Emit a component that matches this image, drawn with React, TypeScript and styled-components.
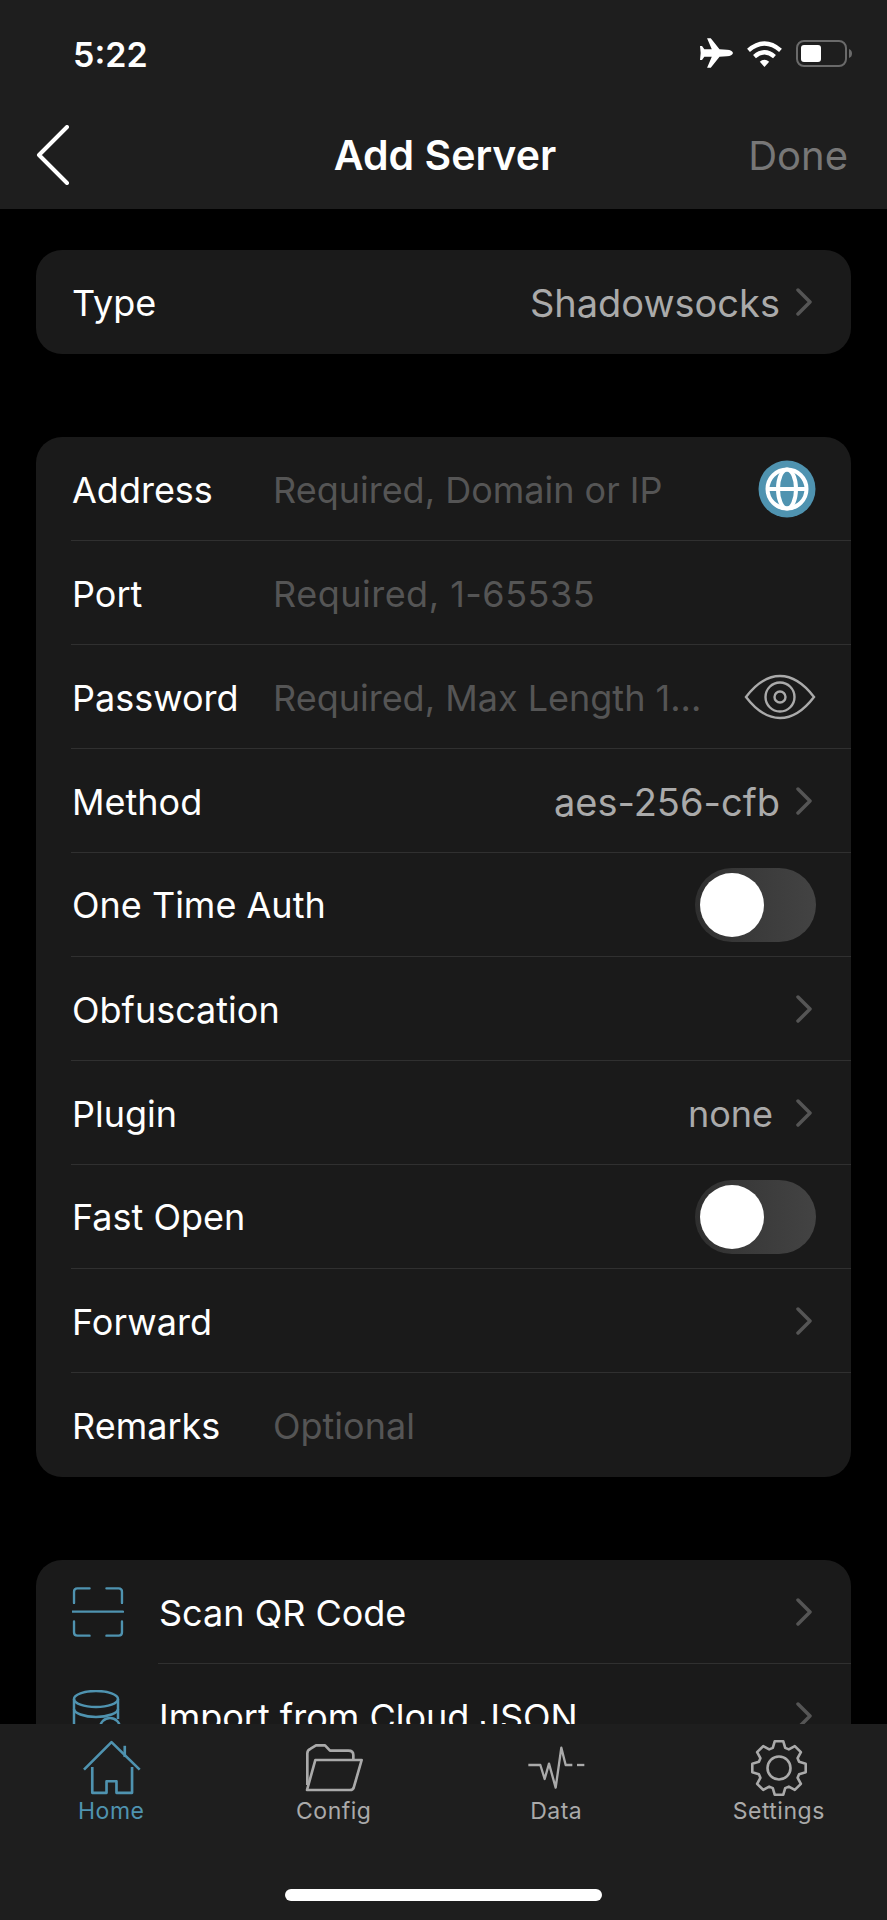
import styled, { createGlobalStyle } from "styled-components";
import type { ReactNode } from "react";

const ACCENT = "#4f93b0";

const GlobalStyle = createGlobalStyle`
    html, body {
        margin: 0;
        padding: 0;
        background: #000;
    }
    * {
        box-sizing: border-box;
    }
`;

const Page = styled.div`
    width: 887px;
    height: 1920px;
    display: flex;
    flex-direction: column;
    overflow: hidden;
    background: #000;
    color: #fff;
    font-family: Inter, "Liberation Sans", sans-serif;
`;

const Header = styled.header`
    height: 209px;
    flex: none;
    background: #1e1e1e;
`;

const StatusBar = styled.div`
    height: 108px;
    padding: 34px 34px 0 73px;
    display: flex;
    justify-content: space-between;
    align-items: flex-start;
`;

const Time = styled.span`
    font-size: 34px;
    line-height: 42px;
    font-weight: 600;
`;

const StatusIcons = styled.div`
    display: flex;
    align-items: center;
    padding-top: 4px;
    gap: 13px;
`;

const NavBar = styled.div`
    height: 94px;
    display: grid;
    grid-template-columns: 126px 1fr 120px;
    align-items: center;
    padding: 0 39px 0 36px;
`;

const Title = styled.h1`
    margin: 0;
    text-align: center;
    font-size: 41px;
    font-weight: 600;
    white-space: nowrap;
`;

const DoneButton = styled.span`
    text-align: right;
    font-size: 40px;
    color: #777;
`;

const Content = styled.main`
    flex: 1;
    min-height: 0;
    overflow: hidden;
    padding: 41px 36px 0;
`;

const Card = styled.section`
    background: #1a1a1a;
    border-radius: 26px;
    overflow: hidden;
    margin-bottom: 83px;
`;

const Row = styled.div`
    height: 104px;
    margin-left: 35px;
    padding: 0 35px 0 1px;
    display: flex;
    align-items: center;
    border-bottom: 1px solid #303030;
    &:last-child {
        border-bottom: none;
    }
`;

const Label = styled.span`
    padding-top: 2px;
    font-size: 36px;
    white-space: nowrap;
`;

const FieldLabel = styled(Label)`
    width: 201px;
    flex: none;
`;

const ToggleLabel = styled(Label)`
    padding-top: 0;
`;

const Placeholder = styled.span<{ $numeric?: boolean }>`
    flex: 1;
    padding-top: 2px;
    font-size: 36px;
    letter-spacing: ${(p) => (p.$numeric ? "0.5px" : "0")};
    color: #555;
    white-space: nowrap;
`;

const Value = styled.span<{ $small?: boolean }>`
    margin-left: auto;
    margin-right: ${(p) => (p.$small ? "7px" : "0")};
    padding-top: 2px;
    font-size: ${(p) => (p.$small ? "36px" : "38px")};
    color: #aaa;
    white-space: nowrap;
`;

const ChevronBox = styled.span<{ $bare?: boolean }>`
    margin-left: ${(p) => (p.$bare ? "auto" : "15px")};
    margin-right: 3px;
    display: flex;
`;

const Toggle = styled.span`
    margin-left: auto;
    width: 121px;
    height: 74px;
    flex: none;
    padding: 5px;
    border-radius: 37px;
    background: linear-gradient(90deg, #2f2f2f 0%, #3a3a3a 45%, #434343 100%);
`;

const Thumb = styled.span`
    display: block;
    width: 64px;
    height: 64px;
    border-radius: 50%;
    background: #fff;
`;

const MenuRow = styled.div`
    height: 104px;
    display: flex;
    align-items: stretch;
    padding-left: 36px;
    &:last-child > div {
        border-bottom: none;
    }
`;

const MenuIcon = styled.span`
    width: 86px;
    flex: none;
    display: flex;
    align-items: center;
`;

const MenuBody = styled.div`
    flex: 1;
    display: flex;
    align-items: center;
    padding: 0 35px 0 1px;
    border-bottom: 1px solid #303030;
`;

const TabBar = styled.nav`
    height: 196px;
    flex: none;
    background: #1e1e1e;
    display: flex;
    flex-direction: column;
    justify-content: space-between;
    padding: 14px 0 19px;
`;

const Tabs = styled.div`
    display: grid;
    grid-template-columns: repeat(4, 222.5px);
`;

const Tab = styled.div<{ $active?: boolean }>`
    display: flex;
    flex-direction: column;
    align-items: center;
    color: ${(p) => (p.$active ? ACCENT : "#aaa")};
`;

const TabIcon = styled.span`
    height: 60px;
    display: flex;
    align-items: center;
    justify-content: center;
`;

const TabLabel = styled.span`
    font-size: 23px;
    line-height: 26px;
    letter-spacing: 0.5px;
`;

const HomeIndicator = styled.div`
    width: 317px;
    height: 12px;
    margin: 0 auto;
    border-radius: 6px;
    background: #fff;
`;

const Chevron = () => (
    <svg width="18" height="28" viewBox="0 0 18 28" fill="none">
        <path d="M3 2l12 12L3 26" stroke="#555" strokeWidth="3.500" strokeLinecap="round" strokeLinejoin="round" />
    </svg>
);

const Plane = () => (
    <svg width="33" height="30" viewBox="120 57 98 88" fill="#fff">
        <path d="M218 101Q216 92 200 91L178 90 152 57H141L155 90 133 90 126 80H120L122 101 120 122H126L133 112 155 112 141 145H152L178 112 200 111Q216 110 218 101Z" />
    </svg>
);

const Wifi = () => (
    <svg width="37" height="27" viewBox="258 60 108 81" fill="none" stroke="#fff" strokeWidth="13">
        <path d="M264 91Q312 50 360 91" />
        <path d="M282 110Q312 84 342 110" />
        <path d="M298 125L312 141 326 125Q312 113 298 125Z" fill="#fff" stroke="none" />
    </svg>
);

const Battery = () => (
    <svg width="57" height="27" viewBox="0 0 57 27" fill="none">
        <rect x="1" y="1" width="49" height="25" rx="7" stroke="#6a6a6a" strokeWidth="2" />
        <rect x="5" y="5" width="20" height="17" rx="3" fill="#fff" />
        <path d="M53 9q3 1 3 4.500t-3 4.500z" fill="#6a6a6a" />
    </svg>
);

const BackIcon = () => (
    <svg width="34" height="60" viewBox="0 0 34 60" fill="none">
        <path d="M31 2L3 30l28 28" stroke="#fff" strokeWidth="4" strokeLinecap="round" strokeLinejoin="round" />
    </svg>
);

const GlobeIcon = () => (
    <svg width="58" height="58" viewBox="0 0 58 58" fill="none" stroke="#fff" strokeWidth="4">
        <circle cx="29" cy="29" r="28.500" fill={ACCENT} stroke="none" />
        <circle cx="29" cy="29" r="19.500" />
        <ellipse cx="29" cy="29" rx="9" ry="19.500" />
        <path d="M9 29h40" />
    </svg>
);

const EyeIcon = () => (
    <svg width="72" height="46" viewBox="0 0 72 46" fill="none" stroke="#aaa" strokeWidth="2.400">
        <path d="M2 23Q18 2 36 2t34 21Q54 44 36 44T2 23Z" />
        <circle cx="36" cy="23" r="14.500" />
        <circle cx="36" cy="23" r="5.500" />
    </svg>
);

const ScanIcon = () => (
    <svg width="52" height="52" viewBox="214 142 154 150" fill="none" stroke={ACCENT} strokeWidth="7" strokeLinecap="round">
        <path d="M266 147H230Q220 147 220 157V190" />
        <path d="M316 147H352Q362 147 362 157V190" />
        <path d="M266 287H230Q220 287 220 277V245" />
        <path d="M316 287H352Q362 287 362 277V245" />
        <path d="M216 216H365" />
    </svg>
);

// only the top of this one shows, the tab bar covers the rest
const CloudIcon = () => (
    <svg width="50" height="52" viewBox="0 0 50 52" fill="none" stroke={ACCENT} strokeWidth="2.500">
        <ellipse cx="24" cy="9" rx="22" ry="8" />
        <path d="M2 9v36c0 4 10 7 22 7M46 9v20" />
        <path d="M2 19c0 4 10 8 22 8s22-4 22-8" />
        <circle cx="38" cy="38" r="10" />
    </svg>
);

const HomeIcon = () => (
    <svg width="63" height="60" viewBox="240 595 190 180" fill="none" stroke={ACCENT} strokeWidth="8" strokeLinejoin="round">
        <path d="M252 690L335 607 420 690" />
        <path d="M375 618V652" />
        <path d="M277 682V760H320V725H350V760H397V682" />
    </svg>
);

const FolderIcon = () => (
    <svg width="60" height="54" viewBox="912 608 180 152" fill="none" stroke="#aaa" strokeWidth="8" strokeLinejoin="round">
        <path d="M922 735V640Q922 630 932 626L948 616H975L990 632H1045Q1060 632 1060 645V658" />
        <path d="M946 660H1085L1062 740Q1060 750 1050 750H921Z" />
    </svg>
);

const PulseIcon = () => (
    <svg width="58" height="46" viewBox="232 136 174 138" fill="none" stroke="#aaa" strokeWidth="7" strokeLinejoin="round">
        <path d="M236 196H272L285 238 298 192 318 264 335 144 348 196H368" />
        <path d="M382 196H404" />
    </svg>
);

// the cog has 8 teeth, one of them pointing straight up
const gearPath = () => {
    const points: string[] = [];
    for (let i = 0; i < 8; i++) {
        const centre = (i * Math.PI) / 4 - Math.PI / 2;
        const steps: [number, number][] = [
            [-0.3, 21],
            [-0.16, 27],
            [0.16, 27],
            [0.3, 21],
        ];
        steps.forEach(([offset, radius]) => {
            const x = 30 + radius * Math.cos(centre + offset);
            const y = 30 + radius * Math.sin(centre + offset);
            points.push(`${x.toFixed(1)} ${y.toFixed(1)}`);
        });
    }
    return `M${points.join("L")}Z`;
};

const GearIcon = () => (
    <svg width="60" height="60" viewBox="0 0 60 60" fill="none" stroke="#aaa" strokeWidth="2.600" strokeLinejoin="round">
        <path d={gearPath()} />
        <circle cx="30" cy="30" r="11.500" />
    </svg>
);

const Switch = () => (
    <Toggle>
        <Thumb />
    </Toggle>
);

const TABS: { label: string; icon: ReactNode; active?: boolean }[] = [
    { label: "Home", icon: <HomeIcon />, active: true },
    { label: "Config", icon: <FolderIcon /> },
    { label: "Data", icon: <PulseIcon /> },
    { label: "Settings", icon: <GearIcon /> },
];

export default function App() {
    return (
        <Page>
            <GlobalStyle />
            <Header>
                <StatusBar>
                    <Time>5:22</Time>
                    <StatusIcons>
                        <Plane />
                        <Wifi />
                        <Battery />
                    </StatusIcons>
                </StatusBar>
                <NavBar>
                    <BackIcon />
                    <Title>Add Server</Title>
                    <DoneButton>Done</DoneButton>
                </NavBar>
            </Header>
            <Content>
                <Card>
                    <Row>
                        <Label>Type</Label>
                        <Value>Shadowsocks</Value>
                        <ChevronBox><Chevron /></ChevronBox>
                    </Row>
                </Card>
                <Card>
                    <Row>
                        <FieldLabel>Address</FieldLabel>
                        <Placeholder>Required, Domain or IP</Placeholder>
                        <GlobeIcon />
                    </Row>
                    <Row>
                        <FieldLabel>Port</FieldLabel>
                        <Placeholder $numeric>Required, 1-65535</Placeholder>
                    </Row>
                    <Row>
                        <FieldLabel>Password</FieldLabel>
                        <Placeholder>Required, Max Length 1...</Placeholder>
                        <EyeIcon />
                    </Row>
                    <Row>
                        <Label>Method</Label>
                        <Value>aes-256-cfb</Value>
                        <ChevronBox><Chevron /></ChevronBox>
                    </Row>
                    <Row>
                        <ToggleLabel>One Time Auth</ToggleLabel>
                        <Switch />
                    </Row>
                    <Row>
                        <Label>Obfuscation</Label>
                        <ChevronBox $bare><Chevron /></ChevronBox>
                    </Row>
                    <Row>
                        <Label>Plugin</Label>
                        <Value $small>none</Value>
                        <ChevronBox><Chevron /></ChevronBox>
                    </Row>
                    <Row>
                        <ToggleLabel>Fast Open</ToggleLabel>
                        <Switch />
                    </Row>
                    <Row>
                        <Label>Forward</Label>
                        <ChevronBox $bare><Chevron /></ChevronBox>
                    </Row>
                    <Row>
                        <FieldLabel>Remarks</FieldLabel>
                        <Placeholder>Optional</Placeholder>
                    </Row>
                </Card>
                <Card>
                    <MenuRow>
                        <MenuIcon><ScanIcon /></MenuIcon>
                        <MenuBody>
                            <Label>Scan QR Code</Label>
                            <ChevronBox $bare><Chevron /></ChevronBox>
                        </MenuBody>
                    </MenuRow>
                    <MenuRow>
                        <MenuIcon><CloudIcon /></MenuIcon>
                        <MenuBody>
                            <Label>Import from Cloud JSON</Label>
                            <ChevronBox $bare><Chevron /></ChevronBox>
                        </MenuBody>
                    </MenuRow>
                </Card>
            </Content>
            <TabBar>
                <Tabs>
                    {TABS.map((tab) => (
                        <Tab key={tab.label} $active={tab.active}>
                            <TabIcon>{tab.icon}</TabIcon>
                            <TabLabel>{tab.label}</TabLabel>
                        </Tab>
                    ))}
                </Tabs>
                <HomeIndicator />
            </TabBar>
        </Page>
    );
}
